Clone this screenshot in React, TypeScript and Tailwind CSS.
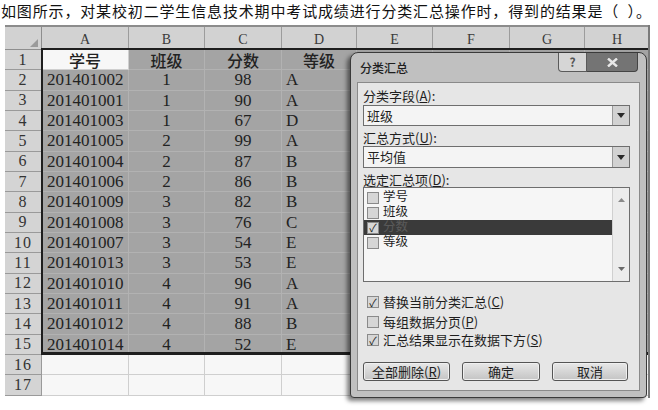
const cjk = '"Noto Sans CJK SC", "Noto Sans", sans-serif';
const serif = '"Liberation Serif", "Noto Sans CJK SC", serif';
const tight = '"Liberation Sans", "Noto Sans CJK SC", sans-serif';

const cols = [
  { key: 'A', w: 87 },
  { key: 'B', w: 76 },
  { key: 'C', w: 77 },
  { key: 'D', w: 75 },
  { key: 'E', w: 76 },
  { key: 'F', w: 77 },
  { key: 'G', w: 75 },
  { key: 'H', w: 65 },
];

const rows: string[][] = [
  ['学号', '班级', '分数', '等级'],
  ['201401002', '1', '98', 'A'],
  ['201401001', '1', '90', 'A'],
  ['201401003', '1', '67', 'D'],
  ['201401005', '2', '99', 'A'],
  ['201401004', '2', '87', 'B'],
  ['201401006', '2', '86', 'B'],
  ['201401009', '3', '82', 'B'],
  ['201401008', '3', '76', 'C'],
  ['201401007', '3', '54', 'E'],
  ['201401013', '3', '53', 'E'],
  ['201401010', '4', '96', 'A'],
  ['201401011', '4', '91', 'A'],
  ['201401012', '4', '88', 'B'],
  ['201401014', '4', '52', 'E'],
  [],
  [],
];

const Check = ({ checked }: { checked?: boolean }) => (
  <span className="w-[12px] h-[12px] border border-[#8a8a8a] bg-[#d6d6d6] flex items-center justify-center text-[11px] leading-none text-[#222] shrink-0">
    {checked ? '✓' : ''}
  </span>
);

const Label = ({ text, k }: { text: string; k: string }) => (
  <span>
    {text}(<span className="underline">{k}</span>)
  </span>
);

const Combo = ({ value, h }: { value: string; h: string }) => (
  <div className={`${h} w-[267px] border border-[#6e6e6e] bg-[#f4f4f4] flex items-center`}>
    <span className="pl-[3px] flex-1 text-[13px]">{value}</span>
    <div className="w-[17px] h-full border-l border-[#9a9a9a] bg-[#d2d2d2] flex items-center justify-center">
      <svg width="8" height="5" viewBox="0 0 8 5">
        <path d="M0 0h8L4 5z" fill="#2a2a2a" />
      </svg>
    </div>
  </div>
);

const Button = ({ w, children }: { w: string; children: React.ReactNode }) => (
  <div className={`${w} h-[19px] rounded-[3px] border border-[#555] bg-gradient-to-b from-[#e8e8e8] to-[#c4c4c4] flex items-center justify-center text-[13px] shadow-[inset_0_0_0_1px_#f0f0f0]`}>
    {children}
  </div>
);

export default function App() {
  return (
    <div className="w-[658px] h-[410px] bg-white overflow-hidden text-[#1e1e1e]" style={{ fontFamily: cjk }}>
      <div className="h-[25px] pl-[1px] text-[15px] leading-[21px] tracking-[0.85px] text-[#111] whitespace-nowrap">
        如图所示，对某校初二学生信息技术期中考试成绩进行分类汇总操作时，得到的结果是（ &nbsp;）。
      </div>

      <div className="relative ml-[5px] w-[645px]">
        {/* column headers */}
        <div className="flex h-[25px] border-t-2 border-[#8c8c8c] bg-[#d2d2d2]">
          <div className="w-[37px] border-r border-b border-[#8e8e8e] flex items-end justify-end pr-[3px] pb-[2px]">
            <svg width="8" height="8" viewBox="0 0 8 8">
              <path d="M8 0v8H0z" fill="#9a9a9a" />
            </svg>
          </div>
          {cols.map((c) => (
            <div
              key={c.key}
              style={{ width: c.w, fontFamily: serif }}
              className="border-r border-b border-[#9c9c9c] flex items-end justify-center pb-[1px] text-[14px] leading-[16px] text-[#3a3a3a]"
            >
              {c.key}
            </div>
          ))}
        </div>

        {rows.map((r, i) => {
          const inSel = i < 15;
          return (
            <div key={i} className="flex h-[20.33px]">
              <div
                className="w-[37px] bg-[#d4d4d4] border-r border-b border-[#9a9a9a] flex items-center justify-center text-[16px] tracking-[1px] text-[#333]"
                style={{ fontFamily: serif }}
              >
                {i + 1}
              </div>
              {cols.map((c, j) => {
                const v = r[j] ?? '';
                const white = !inSel || (i === 0 && j === 0);
                const isHead = i === 0;
                const align = isHead
                  ? 'justify-center'
                  : j === 0
                  ? 'justify-start pl-[5px]'
                  : j === 3
                  ? 'justify-start pl-[4px]'
                  : 'justify-center';
                return (
                  <div
                    key={c.key}
                    style={{ width: c.w, fontFamily: isHead ? cjk : serif }}
                    className={`flex items-center ${align} border-r border-b ${
                      white ? 'bg-[#f7f7f7] border-[#cfcfcf]' : 'bg-[#a4a4a4] border-[#b2b2b2]'
                    } ${isHead ? 'text-[16px] font-medium' : 'text-[17px]'} leading-none text-[#222]`}
                  >
                    {v}
                  </div>
                );
              })}
            </div>
          );
        })}

        {/* selection outline */}
        <div className="absolute left-[36px] top-[23px] w-[609px] h-[307px] border-l-2 border-t-2 border-b-[3px] border-[#1e1e1e] pointer-events-none" />

        <div className="absolute right-0 top-0 w-[2px] h-[373px] bg-[#7a7a7a]" />
      </div>

      {/* dialog */}
      <div className="absolute left-[350px] top-[52px] w-[297px] h-[346px] rounded-t-[8px] rounded-b-[4px] border border-[#3a3a3a] bg-[#c0c0c0] shadow-[-3px_3px_4px_rgba(0,0,0,0.5)] flex flex-col">
        <div className="h-[29px] flex items-start">
          <span className="ml-[9px] mt-[7px] text-[12px] leading-[16px] font-medium">分类汇总</span>
          <div className="ml-auto mr-[8px] flex">
            <div className="w-[29px] h-[19px] border border-[#5a5a5a] border-t-0 rounded-bl-[4px] bg-[#d6d6d6] flex items-center justify-center text-[12px] font-bold text-[#555]">
              ?
            </div>
            <div className="w-[51px] h-[19px] border border-[#444] border-t-0 border-l-0 rounded-br-[4px] bg-[#747474] flex items-center justify-center">
              <svg width="11" height="9" viewBox="0 0 11 9">
                <path d="M1 0.5l9 8M10 0.5l-9 8" stroke="#e8e8e8" strokeWidth="2.4" />
              </svg>
            </div>
          </div>
        </div>

        <div className="mx-[6px] mb-[6px] flex-1 bg-[#e6e6e6] border border-[#8a8a8a] pl-[5px] flex flex-col text-[13px] leading-[14px]">
          <div className="mt-[6px] h-[14px]">
            <Label text="分类字段" k="A" />:
          </div>
          <div className="mt-[2px]">
            <Combo value="班级" h="h-[21px]" />
          </div>
          <div className="mt-[5px] h-[14px]">
            <Label text="汇总方式" k="U" />:
          </div>
          <div className="mt-[1px]">
            <Combo value="平均值" h="h-[22px]" />
          </div>
          <div className="mt-[5px] h-[14px]">
            <Label text="选定汇总项" k="D" />:
          </div>

          <div className="h-[95px] w-[267px] border border-[#6e6e6e] bg-[#f6f6f6] flex">
            <div className="flex-1 pt-[2px] flex flex-col">
              {['学号', '班级', '分数', '等级'].map((t) => {
                const sel = t === '分数';
                return (
                  <div
                    key={t}
                    className={`h-[15px] flex items-center gap-[4px] pl-[3px] ${sel ? 'bg-[#3a3a3a] text-[#5a5a5a]' : ''}`}
                  >
                    <Check checked={sel} />
                    <span className="text-[12.5px] leading-[15px]" style={{ fontFamily: tight }}>
                      {t}
                    </span>
                  </div>
                );
              })}
            </div>
            <div className="w-[17px] bg-[#ececec] border-l border-[#d0d0d0] flex flex-col items-center justify-between py-[10px]">
              <svg width="7" height="4" viewBox="0 0 7 4">
                <path d="M0 4h7L3.5 0z" fill="#8a8a8a" />
              </svg>
              <svg width="7" height="4" viewBox="0 0 7 4">
                <path d="M0 0h7L3.5 4z" fill="#6a6a6a" />
              </svg>
            </div>
          </div>

          <div className="mt-[13px] h-[14px] flex items-center gap-[4px] pl-[4px]">
            <Check checked />
            <Label text="替换当前分类汇总" k="C" />
          </div>
          <div className="mt-[6px] h-[14px] flex items-center gap-[4px] pl-[4px]">
            <Check />
            <Label text="每组数据分页" k="P" />
          </div>
          <div className="mt-[4px] h-[14px] flex items-center gap-[4px] pl-[4px]">
            <Check checked />
            <Label text="汇总结果显示在数据下方" k="S" />
          </div>

          <div className="mt-[15px] flex gap-[12px]">
            <Button w="w-[87px]">
              <Label text="全部删除" k="R" />
            </Button>
            <Button w="w-[78px]">确定</Button>
            <Button w="w-[76px]">取消</Button>
          </div>
        </div>
      </div>
    </div>
  );
}
